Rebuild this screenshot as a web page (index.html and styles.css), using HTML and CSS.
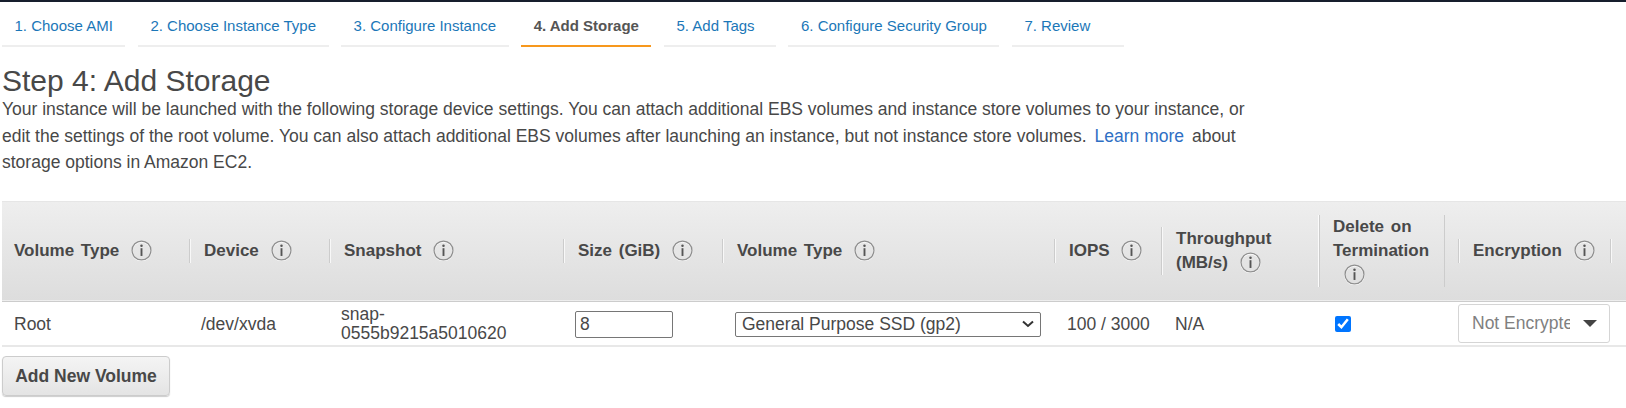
FILE: index.html
```html
<!DOCTYPE html>
<html lang="en">
<head>
<meta charset="utf-8">
<title>Step 4: Add Storage</title>
<link rel="stylesheet" href="styles.css">
</head>
<body>
<svg class="defs" width="0" height="0" aria-hidden="true">
  <symbol id="info" viewBox="0 0 20 20">
    <circle cx="10" cy="10" r="9" fill="none" stroke="#fff" stroke-width="1.4" transform="translate(0 .6)"/>
    <circle cx="10" cy="10" r="9" fill="none" stroke="#8f8f8f" stroke-width="1.2"/>
    <circle cx="10" cy="5.4" r="1.2" fill="#555"/>
    <rect x="9.1" y="7.8" width="1.8" height="7.4" fill="#555"/>
  </symbol>
</svg>
<div class="topbar"></div>
<nav class="tabs">
  <a class="tab">1. Choose AMI</a>
  <a class="tab">2. Choose Instance Type</a>
  <a class="tab">3. Configure Instance</a>
  <a class="tab active">4. Add Storage</a>
  <a class="tab">5. Add Tags</a>
  <a class="tab">6. Configure Security Group</a>
  <a class="tab">7. Review</a>
</nav>
<main class="content">
  <h1 class="title">Step 4: Add Storage</h1>
  <p class="intro">Your instance will be launched with the following storage device settings. You can attach additional EBS volumes and instance store volumes to your instance, or<br>edit the settings of the root volume. You can also attach additional EBS volumes after launching an instance, but not instance store volumes. <a class="link">Learn more</a> about<br>storage options in Amazon EC2.</p>
  <table class="volumes">
    <colgroup>
      <col class="c1"><col class="c2"><col class="c3"><col class="c4"><col class="c5"><col class="c6"><col class="c7"><col class="c8"><col class="c9"><col class="c10">
    </colgroup>
    <thead>
      <tr>
        <th><div class="head first">Volume Type <svg class="info"><use href="#info"/></svg></div></th>
        <th><div class="head">Device <svg class="info"><use href="#info"/></svg></div></th>
        <th><div class="head">Snapshot <svg class="info"><use href="#info"/></svg></div></th>
        <th><div class="head">Size (GiB) <svg class="info"><use href="#info"/></svg></div></th>
        <th><div class="head">Volume Type <svg class="info"><use href="#info"/></svg></div></th>
        <th><div class="head">IOPS <svg class="info"><use href="#info"/></svg></div></th>
        <th><div class="head">Throughput<br>(MB/s) <svg class="info"><use href="#info"/></svg></div></th>
        <th><div class="head tall">Delete on<br>Termination<br><svg class="info indent"><use href="#info"/></svg></div></th>
        <th><div class="head">Encryption <svg class="info"><use href="#info"/></svg></div></th>
        <th><div class="head"></div></th>
      </tr>
    </thead>
    <tbody>
      <tr>
        <td class="root">Root</td>
        <td class="device">/dev/xvda</td>
        <td class="snapshot">snap-<br>0555b9215a5010620</td>
        <td class="size"><input class="size-input" type="text" value="8"></td>
        <td class="type"><select class="type-select"><option>General Purpose SSD (gp2)</option></select></td>
        <td class="iops">100 / 3000</td>
        <td class="tp">N/A</td>
        <td class="del"><input class="check" type="checkbox" checked></td>
        <td class="encrypt">
          <div class="dropdown"><span class="dropdown-text">Not Encrypted</span><span class="caret"></span></div>
        </td>
        <td></td>
      </tr>
    </tbody>
  </table>
  <button class="add" type="button">Add New Volume</button>
</main>
</body>
</html>
```
FILE: styles.css
```css
* { box-sizing: border-box; }
html, body { margin: 0; padding: 0; background: #fff; }
body {
  font-family: "Liberation Sans", Arial, sans-serif;
  color: #484848;
  overflow: hidden;
  height: 408px;
}
.defs { display: block; height: 0; }
.topbar { height: 2px; background: #161e2d; }

.tabs { display: flex; gap: 12.5px; margin: 0 0 0 2px; height: 45px; }
.tab {
  display: flex;
  align-items: center;
  min-width: 112px;
  height: 45px;
  padding: 4px 12.5px 0;
  font-size: 15px;
  color: #1b77b8;
  border-bottom: 2px solid #eee;
}
.tab.active { color: #555; font-weight: 700; border-bottom-color: #f7981d; }

.content { padding: 0 0 0 2px; }
.title {
  margin: 17px 0 0;
  font-size: 30px;
  line-height: 33px;
  font-weight: 400;
  color: #484848;
}
.intro { margin: -1px 0 0; font-size: 17.5px; line-height: 26.5px; color: #484848; }
.link { color: #2f6fc4; margin: 0 3px; }

.volumes {
  width: 1624px;
  margin-top: 25px;
  border-collapse: collapse;
  table-layout: fixed;
}
.c1 { width: 187px; }
.c2 { width: 140px; }
.c3 { width: 234px; }
.c4 { width: 159px; }
.c5 { width: 332px; }
.c6 { width: 107px; }
.c7 { width: 158px; }
.c8 { width: 139px; }
.c9 { width: 152px; }
.c10 { width: 16px; }

.volumes thead tr {
  height: 100px;
  background: linear-gradient(#eee, #ddd);
  border-top: 1px solid #e6e6e6;
  border-bottom: 1px solid #ccc;
}
.volumes th { padding: 0; text-align: left; vertical-align: middle; }
.head {
  min-height: 24px;
  padding: 0 0 0 14px;
  border-left: 1px solid #ccc;
  box-shadow: inset 1px 0 0 #f8f8f8;
  font-size: 17px;
  line-height: 24px;
  font-weight: 700;
  color: #484848;
  word-spacing: 2px;
}
.head.first { border-left: 0; box-shadow: none; padding-left: 12px; }
.head.tall {
  width: 126px;
  padding-left: 13px;
  box-shadow: -1px 0 0 #fbfbfb;
  border-right: 1px solid #ccc;
}
.info { width: 21px; height: 21px; margin-left: 5px; vertical-align: -5px; }
.info.indent { margin-left: 11px; }

.volumes td {
  height: 45px;
  padding: 2px 0 0;
  font-size: 17.5px;
  line-height: 19px;
  color: #484848;
  vertical-align: middle;
}
.volumes tbody tr { border-bottom: 2px solid #e8e8e8; }
.volumes td.root { padding-left: 12px; }
.volumes td.device { padding-left: 12px; }
.volumes td.snapshot { padding-left: 12px; }
.volumes td.size { padding-left: 12px; }
.volumes td.type { padding-left: 13px; }
.volumes td.iops { padding-left: 13px; }
.volumes td.tp { padding-left: 14px; }
.volumes td.del { padding-left: 16px; }
.volumes td.encrypt { padding: 0; }

.size-input {
  display: block;
  width: 98px;
  height: 27px;
  padding: 0 4px;
  border: 1px solid #767676;
  border-radius: 2px;
  font: 17.5px "Liberation Sans", Arial, sans-serif;
  color: #484848;
}
.type-select {
  display: block;
  width: 306px;
  height: 25px;
  padding: 0 2px 0 6px;
  border: 1px solid #767676;
  border-radius: 2px;
  appearance: none;
  font: 17.5px "Liberation Sans", Arial, sans-serif;
  color: #484848;
  background: #fff url("data:image/svg+xml,%3Csvg xmlns='http://www.w3.org/2000/svg' width='12' height='8'%3E%3Cpath d='M1 1.5l5 4.5 5-4.5' fill='none' stroke='%23333' stroke-width='2'/%3E%3C/svg%3E") no-repeat right 6px center;
}
.check { display: block; width: 16px; height: 16px; margin: 0; }
.dropdown {
  display: flex;
  align-items: center;
  width: 152px;
  height: 39px;
  padding: 0 12px 0 13px;
  border: 1px solid #d5d5d5;
  border-radius: 3px;
  background: #fff;
}
.dropdown-text {
  flex: 1;
  min-width: 0;
  overflow: hidden;
  white-space: nowrap;
  color: #808080;
}
.caret {
  flex: none;
  margin-left: 13px;
  border-top: 7px solid #444;
  border-left: 7px solid transparent;
  border-right: 7px solid transparent;
}

.add {
  display: block;
  width: 168px;
  height: 40px;
  margin-top: 9px;
  padding: 0;
  border: 1px solid #ccc;
  border-radius: 4px;
  background: linear-gradient(#f4f4f4, #e4e4e4);
  box-shadow: 0 1px 1px #ccc;
  font: 700 17.5px "Liberation Sans", Arial, sans-serif;
  color: #484848;
}
```
